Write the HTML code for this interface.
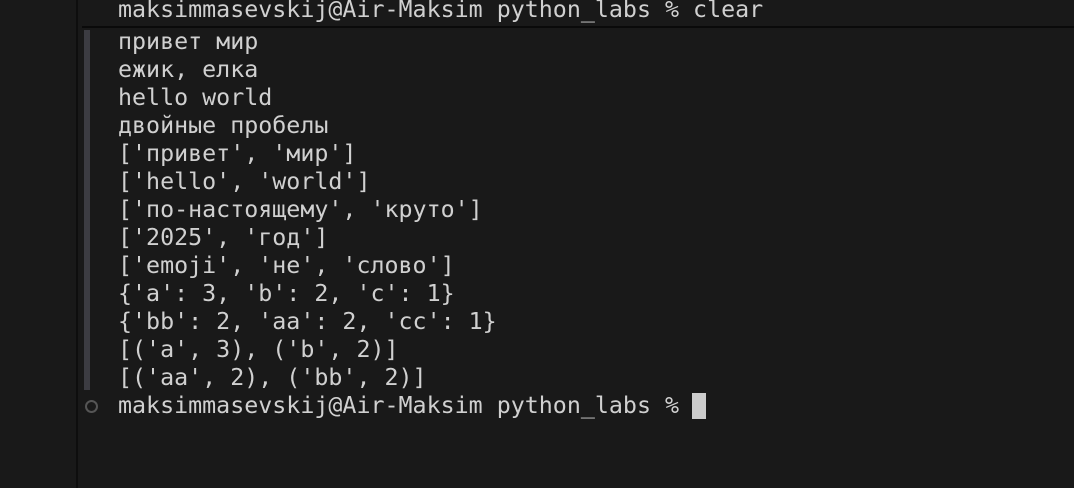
<!DOCTYPE html>
<html><head><meta charset="utf-8"><style>
html,body{margin:0;padding:0;width:1074px;height:488px;overflow:hidden;background:#191919;}
.vl{position:absolute;left:76px;top:0;width:2px;height:488px;background:#0e0e0e;}
.hl{position:absolute;left:82px;top:26px;width:992px;height:2px;background:#0a0a0a;}
.bar{position:absolute;left:84px;top:30px;width:6px;height:360px;background:#3c3c42;}
.t{position:absolute;left:118px;font-family:"DejaVu Sans Mono","Liberation Mono",monospace;font-size:23.3px;color:#d0d0d0;white-space:pre;line-height:28px;}
.circ{position:absolute;left:85px;top:400px;width:13px;height:13px;border:2px solid #555;border-radius:50%;box-sizing:border-box;}
.cur{position:absolute;left:692px;top:393px;width:14px;height:26px;background:#cccccc;}
</style></head><body>
<div class="vl"></div><div class="hl"></div><div class="bar"></div>
<div class="t" style="top:-4px">maksimmasevskij@Air-Maksim python_labs % clear</div>
<div class="t" style="top:28px">привет мир
ежик, елка
hello world
двойные пробелы
['привет', 'мир']
['hello', 'world']
['по-настоящему', 'круто']
['2025', 'год']
['emoji', 'не', 'слово']
{'a': 3, 'b': 2, 'c': 1}
{'bb': 2, 'aa': 2, 'cc': 1}
[('a', 3), ('b', 2)]
[('aa', 2), ('bb', 2)]
maksimmasevskij@Air-Maksim python_labs % </div>
<div class="circ"></div><div class="cur"></div>
</body></html>
